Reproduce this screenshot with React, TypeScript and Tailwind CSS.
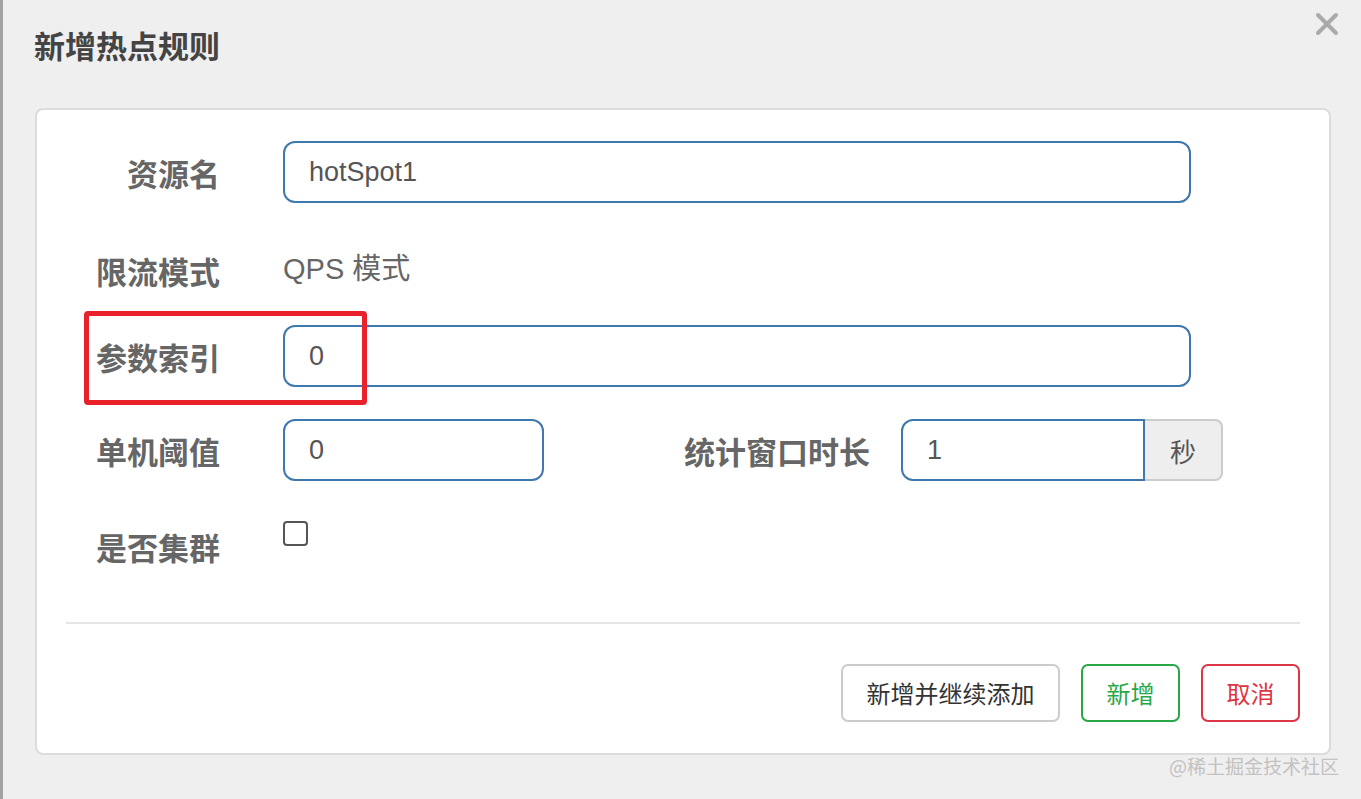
import React from "react"

const cjk = "font-['Noto_Sans_CJK_SC',sans-serif]"
const latin = "font-['Liberation_Sans','Noto_Sans_CJK_SC',sans-serif]"

function Label({ children, className = "" }: { children: React.ReactNode; className?: string }) {
  return (
    <div className={`w-[154px] shrink-0 text-right text-[31px] font-bold text-[#666] leading-none ${cjk} ${className}`}>
      {children}
    </div>
  )
}

function TextInput({ value, className = "" }: { value: string; className?: string }) {
  return (
    <div
      className={`h-[62px] flex items-center px-[24px] border-2 border-[#3e78ae] rounded-[12px] bg-white text-[27px] text-[#555] ${latin} ${className}`}
    >
      {value}
    </div>
  )
}

export default function App() {
  return (
    <div className="w-[1361px] h-[799px] bg-[#efefef] border-l-[3px] border-[#a2a2a2] relative overflow-hidden">
      {/* header */}
      <div className="flex items-start justify-between pl-[31px] pr-[22px] pt-[26px] h-[108px]">
        <h1 className={`text-[31px] font-bold text-[#444] leading-[38px] ${cjk}`}>新增热点规则</h1>
        <button aria-label="close" className="mt-[-14px]">
          <svg width="24" height="24" viewBox="0 0 24 24">
            <path d="M3 3 L21 21 M21 3 L3 21" stroke="#aaa" strokeWidth="4" strokeLinecap="round" />
          </svg>
        </button>
      </div>

      {/* body card */}
      <div className="ml-[32px] w-[1296px] h-[647px] bg-white border-2 border-[#dcdcdc] rounded-[8px] px-[29px] pt-[31px]">
        {/* 资源名 */}
        <div className="flex items-center h-[62px]">
          <Label>资源名</Label>
          <TextInput value="hotSpot1" className="ml-[63px] w-[908px]" />
        </div>

        {/* 限流模式 */}
        <div className="flex items-center h-[62px] mt-[36px]">
          <Label>限流模式</Label>
          <div className={`ml-[63px] text-[29px] text-[#666] ${latin}`}>QPS 模式</div>
        </div>

        {/* 参数索引 */}
        <div className="relative flex items-center h-[62px] mt-[24px]">
          <Label>参数索引</Label>
          <TextInput value="0" className="ml-[63px] w-[908px]" />
          <div className="absolute left-[18px] top-[-14px] w-[283px] h-[94px] border-[5px] border-[#e8212b] rounded-[4px] pointer-events-none" />
        </div>

        {/* 单机阈值 / 统计窗口时长 */}
        <div className="flex items-center h-[62px] mt-[32px]">
          <Label>单机阈值</Label>
          <TextInput value="0" className="ml-[63px] w-[261px]" />
          <div className={`ml-[140px] text-[31px] font-bold text-[#666] leading-none ${cjk}`}>统计窗口时长</div>
          <div className="ml-[31px] flex h-[62px]">
            <div className={`w-[244px] h-full flex items-center px-[24px] border-2 border-[#3e78ae] rounded-l-[12px] text-[27px] text-[#555] ${latin}`}>
              1
            </div>
            <div className={`w-[78px] h-full flex items-center justify-center bg-[#eee] border-2 border-l-0 border-[#ccc] rounded-r-[8px] text-[26px] text-[#555] ${cjk}`}>
              秒
            </div>
          </div>
        </div>

        {/* 是否集群 */}
        <div className="flex items-start h-[62px] mt-[34px]">
          <Label className="mt-[16px]">是否集群</Label>
          <div className="ml-[63px] mt-[6px] w-[25px] h-[25px] border-2 border-[#555] rounded-[4px]" />
        </div>

        <div className="mt-[45px] h-[2px] bg-[#e5e5e5]" />

        <div className="flex justify-end gap-[21px] mt-[40px]">
          <button className={`w-[219px] h-[58px] border-2 border-[#ccc] rounded-[7px] text-[24px] text-[#333] ${cjk}`}>
            新增并继续添加
          </button>
          <button className={`w-[99px] h-[58px] border-2 border-[#28a745] rounded-[7px] text-[24px] text-[#28a745] ${cjk}`}>
            新增
          </button>
          <button className={`w-[99px] h-[58px] border-2 border-[#dc3545] rounded-[7px] text-[24px] text-[#dc3545] ${cjk}`}>
            取消
          </button>
        </div>
      </div>

      <div className={`absolute right-[22px] top-[752px] text-[19px] text-[#c2c2c2] ${cjk}`}>@稀土掘金技术社区</div>
    </div>
  )
}
